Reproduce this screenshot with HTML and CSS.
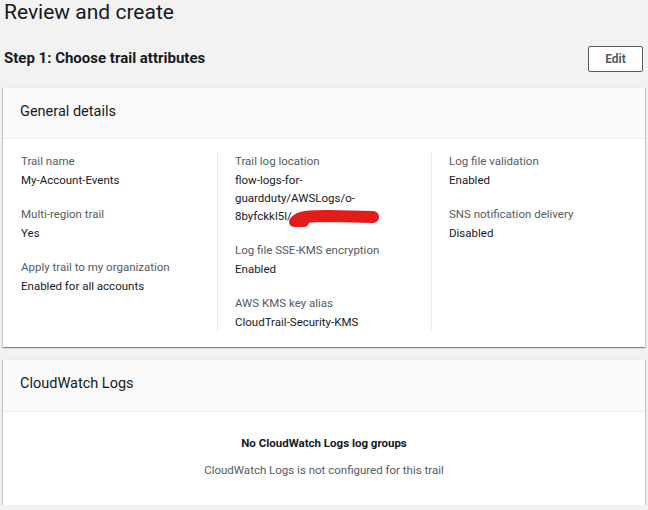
FILE: index.html
```html
<!DOCTYPE html>
<html>
<head>
<meta charset="utf-8">
<link rel="stylesheet" href="styles.css">
</head>
<body>
<div class="page">
  <h1 class="title">Review and create</h1>
  <div class="step-row">
    <h2 class="step">Step 1: Choose trail attributes</h2>
    <button class="edit">Edit</button>
  </div>

  <section class="card">
    <div class="card-head">General details</div>
    <div class="card-body grid">
      <div class="col">
        <div class="field"><div class="label">Trail name</div><div class="value">My-Account-Events</div></div>
        <div class="field"><div class="label">Multi-region trail</div><div class="value">Yes</div></div>
        <div class="field"><div class="label">Apply trail to my organization</div><div class="value">Enabled for all accounts</div></div>
      </div>
      <div class="col">
        <div class="field"><div class="label">Trail log location</div><div class="value">flow-logs-for-<br>guardduty/AWSLogs/o-<br>8byfckkl5l/<span class="redact"><svg width="94" height="18" viewBox="0 0 94 18"><path d="M8 11 C 12 6, 22 6, 40 6 L 85 7" stroke="#e21b1b" stroke-width="12" stroke-linecap="round" fill="none"/><path d="M6 12 L 16 12" stroke="#e21b1b" stroke-width="10" stroke-linecap="round"/></svg></span></div></div>
        <div class="field"><div class="label">Log file SSE-KMS encryption</div><div class="value">Enabled</div></div>
        <div class="field"><div class="label">AWS KMS key alias</div><div class="value">CloudTrail-Security-KMS</div></div>
      </div>
      <div class="col">
        <div class="field"><div class="label">Log file validation</div><div class="value">Enabled</div></div>
        <div class="field"><div class="label">SNS notification delivery</div><div class="value">Disabled</div></div>
      </div>
    </div>
  </section>

  <section class="card">
    <div class="card-head tall">CloudWatch Logs</div>
    <div class="card-body empty">
      <div class="empty-title">No CloudWatch Logs log groups</div>
      <div class="empty-text">CloudWatch Logs is not configured for this trail</div>
    </div>
  </section>
</div>
</body>
</html>
```

FILE: styles.css
```css
html, body {
  margin: 0;
  padding: 0;
  background: #f2f2f2;
}
body {
  font-family: Roboto, "Liberation Sans", sans-serif;
  color: #16191f;
}
.page {
  padding: 0 3px;
}
.title {
  margin: -1px 0 0 0;
  padding-left: 1px;
  font-size: 21px;
  font-weight: 400;
  line-height: 26px;
}
.step-row {
  display: flex;
  justify-content: space-between;
  align-items: center;
  margin-top: 19px;
  height: 28px;
}
.step {
  margin: 0;
  padding-left: 1px;
  font-size: 15px;
  font-weight: 700;
  line-height: 18px;
}
.edit {
  width: 55px;
  height: 26px;
  background: #fff;
  border: 1px solid #545b64;
  border-radius: 2px;
  color: #545b64;
  font-family: Roboto, "Liberation Sans", sans-serif;
  font-weight: 700;
  font-size: 12px;
  margin-right: 2px;
  margin-top: 2px;
  padding: 0;
}
.card {
  background: #fff;
  border-top: 1px solid #eaeded;
  box-shadow: 0 1px 1px 0 rgba(0,28,36,.3), 1px 1px 1px 0 rgba(0,28,36,.15), -1px 1px 1px 0 rgba(0,28,36,.15);
  margin-top: 15px;
}
.card + .card {
  margin-top: 12px;
}
.card-head {
  background: #fafafa;
  border-bottom: 1px solid #eaeded;
  height: 50px;
  line-height: 47px;
  padding-left: 17px;
  font-size: 14.5px;
}
.card-head.tall {
  height: 51px;
  line-height: 48px;
}
.grid {
  display: grid;
  grid-template-columns: 1fr 1fr 1fr;
  padding: 13px 0 16px 0;
}
.col {
  padding-left: 17px;
  border-left: 1px solid #eaeded;
}
.col:first-child {
  border-left-color: transparent;
}
.field {
  font-size: 11.5px;
  line-height: 18px;
}
.field + .field {
  margin-top: 16px;
}
.label {
  color: #545b64;
  margin-bottom: 1px;
}
.value {
  color: #16191f;
}
.redact {
  position: relative;
  display: inline-block;
  width: 0;
}
.redact svg {
  position: absolute;
  left: -4px;
  top: -10px;
}
.empty {
  text-align: center;
  padding: 22px 0 26px;
}
.empty-title {
  font-weight: 700;
  font-size: 11.5px;
  line-height: 18px;
}
.empty-text {
  margin-top: 9px;
  font-size: 11.5px;
  line-height: 18px;
  color: #545b64;
}
```
